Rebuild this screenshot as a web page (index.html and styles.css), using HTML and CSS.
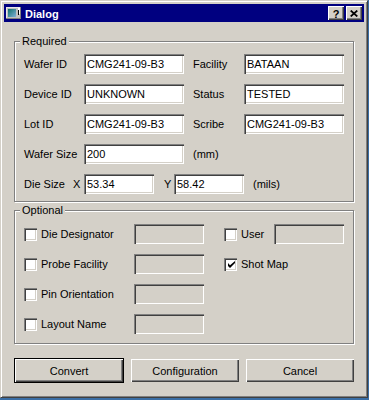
FILE: index.html
```html
<!DOCTYPE html>
<html>
<head>
<meta charset="utf-8">
<title>Dialog</title>
<link rel="stylesheet" href="styles.css">
</head>
<body>
<div class="window">
  <div class="titlebar">
    <svg class="appicon" width="16" height="16" viewBox="0 0 16 16">
      <defs>
        <linearGradient id="g" x1="0" y1="0" x2="1" y2="1">
          <stop offset="0" stop-color="#0f6f6a"/>
          <stop offset="1" stop-color="#7fb0d8"/>
        </linearGradient>
      </defs>
      <rect x="0" y="2" width="15" height="12" fill="#808080"/>
      <rect x="0" y="2" width="14" height="11" fill="#e8e8e8"/>
      <rect x="1" y="3" width="13" height="10" fill="#c0c0c0"/>
      <rect x="2" y="4" width="8" height="8" fill="url(#g)"/>
      <rect x="12" y="3" width="2" height="6" fill="#ffffff"/>
      <rect x="12" y="5" width="1" height="5" fill="#000000"/>
    </svg>
    <span class="title">Dialog</span>
    <div class="caption-btns">
      <span class="cap-btn help">?</span>
      <span class="cap-btn">
        <svg width="8" height="7" viewBox="0 0 8 7"><path d="M0.7 0.5L7.3 6.5M7.3 0.5L0.7 6.5" stroke="#000" stroke-width="1.7" fill="none"/></svg>
      </span>
    </div>
  </div>

  <div class="content">
    <div class="group required">
      <span class="legend">Required</span>
      <div class="row">
        <span class="lbl w60">Wafer ID</span><span class="field w100">CMG241-09-B3</span>
        <span class="lbl w51 ml9">Facility</span><span class="field w100">BATAAN</span>
      </div>
      <div class="row">
        <span class="lbl w60">Device ID</span><span class="field w100">UNKNOWN</span>
        <span class="lbl w51 ml9">Status</span><span class="field w100">TESTED</span>
      </div>
      <div class="row">
        <span class="lbl w60">Lot ID</span><span class="field w100">CMG241-09-B3</span>
        <span class="lbl w51 ml9">Scribe</span><span class="field w100">CMG241-09-B3</span>
      </div>
      <div class="row">
        <span class="lbl w60">Wafer Size</span><span class="field w100">200</span>
        <span class="lbl ml9">(mm)</span>
      </div>
      <div class="row">
        <span class="lbl w49">Die Size</span><span class="lbl w11">X</span><span class="field w70">53.34</span>
        <span class="lbl w10 ml10">Y</span><span class="field w70">58.42</span>
        <span class="lbl ml9">(mils)</span>
      </div>
    </div>

    <div class="group optional">
      <span class="legend">Optional</span>
      <div class="row">
        <div class="cell left"><span class="check"></span><span class="clbl w93">Die Designator</span><span class="field disabled w70"></span></div>
        <div class="cell right"><span class="check"></span><span class="clbl w33">User</span><span class="field disabled w70"></span></div>
      </div>
      <div class="row">
        <div class="cell left"><span class="check"></span><span class="clbl w93">Probe Facility</span><span class="field disabled w70"></span></div>
        <div class="cell right"><span class="check checked"><svg width="7" height="7" viewBox="0 0 7 7"><polygon points="0,2 0,5 2,7 7,2 7,-0 2,4.2" fill="#000"/></svg></span><span class="clbl">Shot Map</span></div>
      </div>
      <div class="row">
        <div class="cell left"><span class="check"></span><span class="clbl w93">Pin Orientation</span><span class="field disabled w70"></span></div>
      </div>
      <div class="row">
        <div class="cell left"><span class="check"></span><span class="clbl w93">Layout Name</span><span class="field disabled w70"></span></div>
      </div>
    </div>

    <div class="buttons">
      <span class="btn default"><span class="btn-inner">Convert</span></span>
      <span class="btn">Configuration</span>
      <span class="btn">Cancel</span>
    </div>
  </div>
</div>
</body>
</html>
```

FILE: styles.css
```css
* { box-sizing: border-box; }
html, body { margin: 0; padding: 0; }
body {
  background: #3a6ea5;
  font-family: "Liberation Sans", Arial, sans-serif;
  font-size: 11px;
  color: #000;
  width: 369px;
  height: 400px;
  overflow: hidden;
}
.window {
  width: 368px;
  height: 398px;
  background: #d4d0c8;
  border: 1px solid;
  border-color: #d4d0c8 #404040 #404040 #d4d0c8;
  box-shadow: inset 1px 1px #ffffff, inset -1px -1px #808080;
  padding: 3px;
  display: flex;
  flex-direction: column;
}
.titlebar {
  height: 18px;
  background: #000080;
  display: flex;
  align-items: center;
  padding: 0 2px 0 2px;
}
.appicon { display: block; flex: none; }
.title {
  color: #fff;
  font-weight: bold;
  font-size: 11px;
  margin-left: 3px;
  padding-top: 1px;
  flex: 1;
}
.caption-btns { display: flex; gap: 2px; }
.cap-btn {
  width: 16px;
  height: 14px;
  background: #d4d0c8;
  box-shadow: inset 1px 1px #ffffff, inset -1px -1px #404040, inset -2px -2px #808080;
  display: flex;
  align-items: center;
  justify-content: center;
  font-weight: bold;
  font-size: 11px;
  line-height: 14px;
}
.cap-btn.help { padding-top: 1px; }
.cap-btn svg { display: block; }

.content {
  flex: 1;
  display: flex;
  flex-direction: column;
  padding: 19px 10px 0 10px;
}
.group {
  position: relative;
  border: 1px solid #808080;
  box-shadow: inset 1px 1px #ffffff, 1px 1px #ffffff;
  display: flex;
  flex-direction: column;
  gap: 10px;
}
.legend {
  position: absolute;
  top: -8px;
  left: 5px;
  background: #d4d0c8;
  padding: 0 2px;
  line-height: 14px;
}
.required { padding: 12px 9px 7px 9px; }
.optional { padding: 13px 9px 9px 9px; margin-top: 8px; }

.row {
  display: flex;
  align-items: center;
  height: 20px;
}
.lbl, .clbl { white-space: nowrap; flex: none; }
.w60 { width: 60px; }
.w51 { width: 51px; }
.w49 { width: 49px; }
.w11 { width: 11px; }
.w10 { width: 10px; }
.w93 { width: 93px; }
.w33 { width: 33px; }
.w100 { width: 100px; }
.w70 { width: 70px; }
.ml9 { margin-left: 9px; }
.ml10 { margin-left: 10px; }

.field {
  flex: none;
  height: 20px;
  background: #fff;
  box-shadow: inset 1px 1px #808080, inset 2px 2px #404040, inset -1px -1px #ffffff, inset -2px -2px #d4d0c8;
  padding: 0 2px 0 3px;
  line-height: 20px;
  white-space: nowrap;
  overflow: hidden;
}
.field.disabled { background: #d4d0c8; }

.cell { display: flex; align-items: center; }
.cell.left { width: 180px; }
.cell.right { width: 120px; margin-left: 20px; }
.check {
  flex: none;
  width: 13px;
  height: 13px;
  background: #fff;
  box-shadow: inset 1px 1px #808080, inset 2px 2px #404040, inset -1px -1px #ffffff, inset -2px -2px #d4d0c8;
  margin-right: 4px;
  display: flex;
  align-items: center;
  justify-content: center;
}
.check svg { display: block; margin-left: 1px; }

.buttons {
  margin-top: 14px;
  display: flex;
  justify-content: space-between;
  align-items: center;
}
.btn {
  width: 108px;
  height: 23px;
  background: #d4d0c8;
  box-shadow: inset 1px 1px #ffffff, inset -1px -1px #404040, inset -2px -2px #808080;
  display: flex;
  align-items: center;
  justify-content: center;
}
.btn.default {
  width: 110px;
  height: 25px;
  border: 1px solid #000;
  box-shadow: none;
  padding: 0;
}
.btn-inner {
  width: 108px;
  height: 23px;
  box-shadow: inset 1px 1px #ffffff, inset -1px -1px #404040, inset -2px -2px #808080;
  display: flex;
  align-items: center;
  justify-content: center;
}
```
